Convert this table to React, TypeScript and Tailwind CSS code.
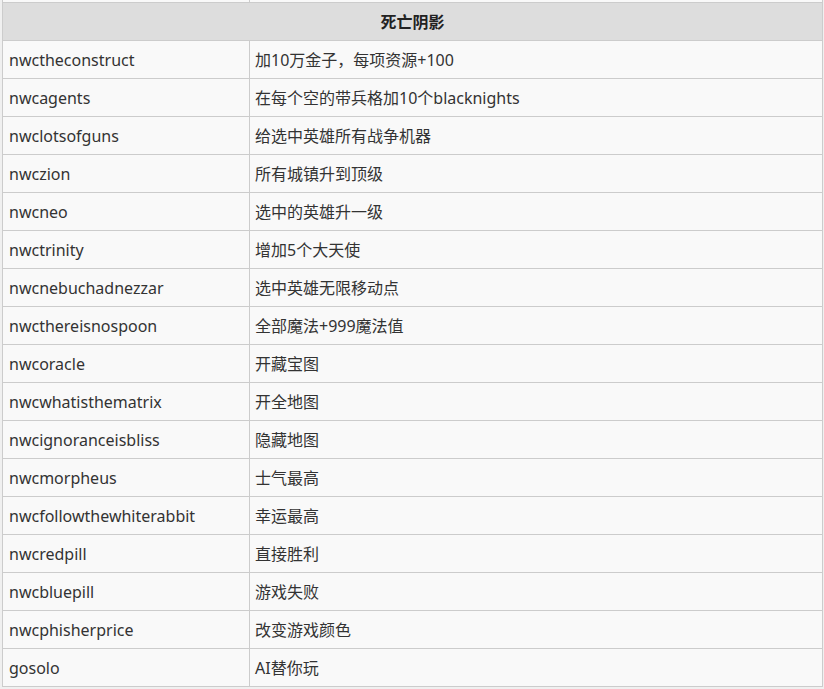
const rows: [string, string][] = [
  ["nwctheconstruct", "加10万金子，每项资源+100"],
  ["nwcagents", "在每个空的带兵格加10个blacknights"],
  ["nwclotsofguns", "给选中英雄所有战争机器"],
  ["nwczion", "所有城镇升到顶级"],
  ["nwcneo", "选中的英雄升一级"],
  ["nwctrinity", "增加5个大天使"],
  ["nwcnebuchadnezzar", "选中英雄无限移动点"],
  ["nwcthereisnospoon", "全部魔法+999魔法值"],
  ["nwcoracle", "开藏宝图"],
  ["nwcwhatisthematrix", "开全地图"],
  ["nwcignoranceisbliss", "隐藏地图"],
  ["nwcmorpheus", "士气最高"],
  ["nwcfollowthewhiterabbit", "幸运最高"],
  ["nwcredpill", "直接胜利"],
  ["nwcbluepill", "游戏失败"],
  ["nwcphisherprice", "改变游戏颜色"],
  ["gosolo", "AI替你玩"],
];

export default function App() {
  return (
    <div
      className="w-[824px] h-[689px] overflow-hidden bg-[#f0f0f0] pl-[2px]"
      style={{ fontFamily: '"Noto Sans", "Noto Sans CJK SC", sans-serif' }}
    >
      <table className="-mt-[1px] w-[821px] border-collapse bg-[#f9f9f9] text-[16px] text-[#333] table-fixed">
        <colgroup>
          <col className="w-[247px]" />
          <col />
        </colgroup>
        <tbody>
          <tr className="h-[3px]">
            <td className="border border-[#cccccc] p-0"></td>
            <td className="border border-[#cccccc] p-0"></td>
          </tr>
          <tr className="h-[38px] bg-[#dddddd]">
            <th
              colSpan={2}
              className="border border-[#cccccc] text-center font-bold text-[16px] text-[#222] p-0"
            >
              死亡阴影
            </th>
          </tr>
          {rows.map(([code, desc]) => (
            <tr key={code} className="h-[38px]">
              <td className="border border-[#cccccc] pl-[6px] pr-[6px] py-0 whitespace-nowrap">{code}</td>
              <td className="border border-[#cccccc] pl-[5px] pr-[6px] py-0 whitespace-nowrap">{desc}</td>
            </tr>
          ))}
        </tbody>
      </table>
    </div>
  );
}
